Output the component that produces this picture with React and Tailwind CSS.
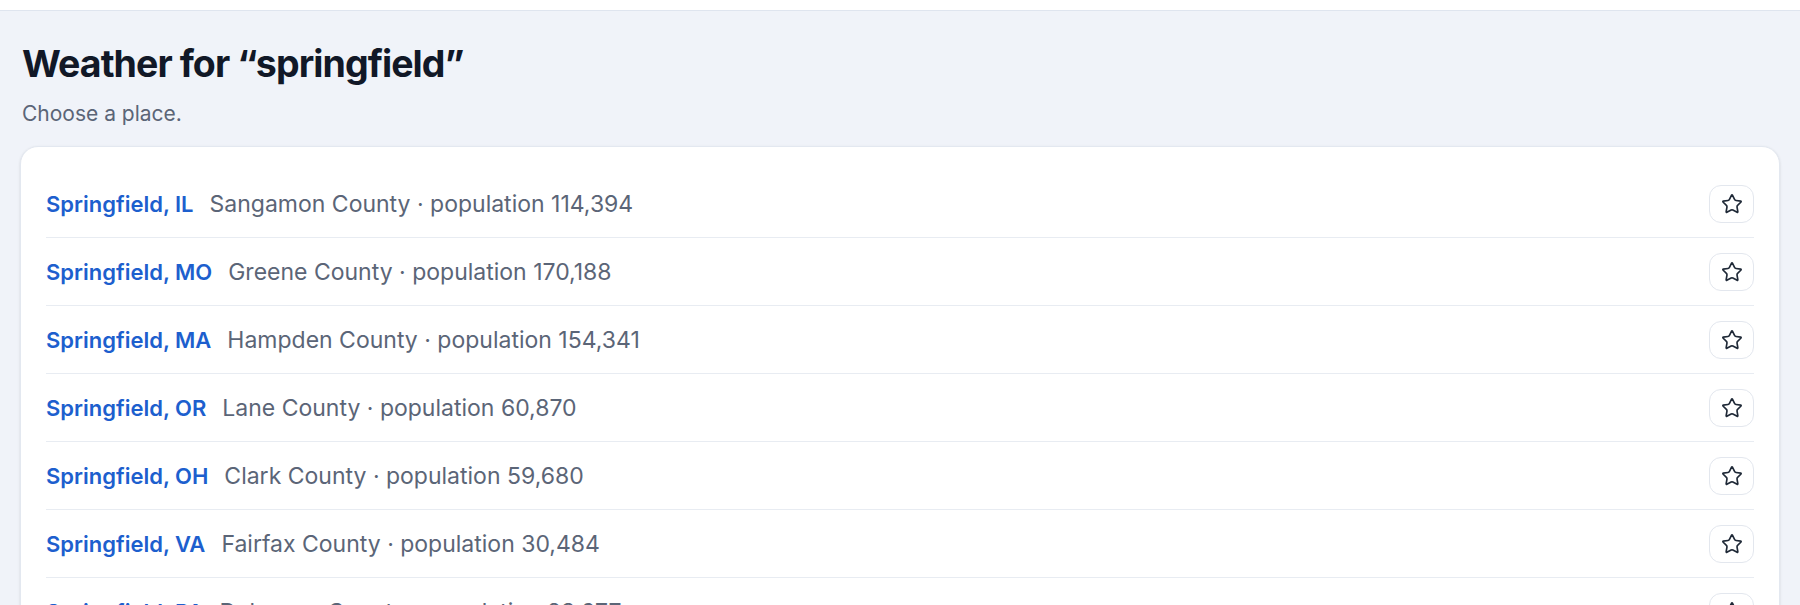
import React from "react";
import { Star } from "lucide-react";

const places = [
  { name: "Springfield, IL", county: "Sangamon County", pop: "114,394" },
  { name: "Springfield, MO", county: "Greene County", pop: "170,188" },
  { name: "Springfield, MA", county: "Hampden County", pop: "154,341" },
  { name: "Springfield, OR", county: "Lane County", pop: "60,870" },
  { name: "Springfield, OH", county: "Clark County", pop: "59,680" },
  { name: "Springfield, VA", county: "Fairfax County", pop: "30,484" },
  { name: "Springfield, PA", county: "Delaware County", pop: "23,677" },
];

const PlaceRow = ({ place }) => (
  <li className="flex items-center h-[68px] border-b border-[#e8ecf2]">
    <a href="#" className="text-[22px] leading-[30px] font-semibold text-[#1d5fce]">
      {place.name}
    </a>
    <span className="ml-[16px] text-[23px] leading-[30px] text-[#5b6577]">
      {place.county} · population {place.pop}
    </span>
    <button className="ml-auto flex items-center justify-center w-[45px] h-[38px] rounded-[12px] border border-[#e3e7ee] bg-white text-[#1f2937]">
      <Star size={22} strokeWidth={1.8} />
    </button>
  </li>
);

export default function App() {
  return (
    <div className="h-screen overflow-hidden bg-[#f0f3f9] font-['Inter',sans-serif]">
      <header className="h-[11px] bg-white border-b border-[#dfe5ef]" />
      <main className="px-5 pt-[33px]">
        <div className="pl-[2px]">
          <h1 className="text-[37.5px] leading-[40px] font-bold text-[#111827] tracking-tight">
            Weather for “springfield”
          </h1>
          <p className="mt-[16px] text-[21px] leading-[28px] text-[#5b6577]">Choose a place.</p>
        </div>
        <div className="mt-[18px] bg-white border border-[#e3e8f0] rounded-[18px] px-[25px] pt-[23px] shadow-sm">
          <ul>
            {places.map((p) => (
              <PlaceRow key={p.name} place={p} />
            ))}
          </ul>
        </div>
      </main>
    </div>
  );
}
